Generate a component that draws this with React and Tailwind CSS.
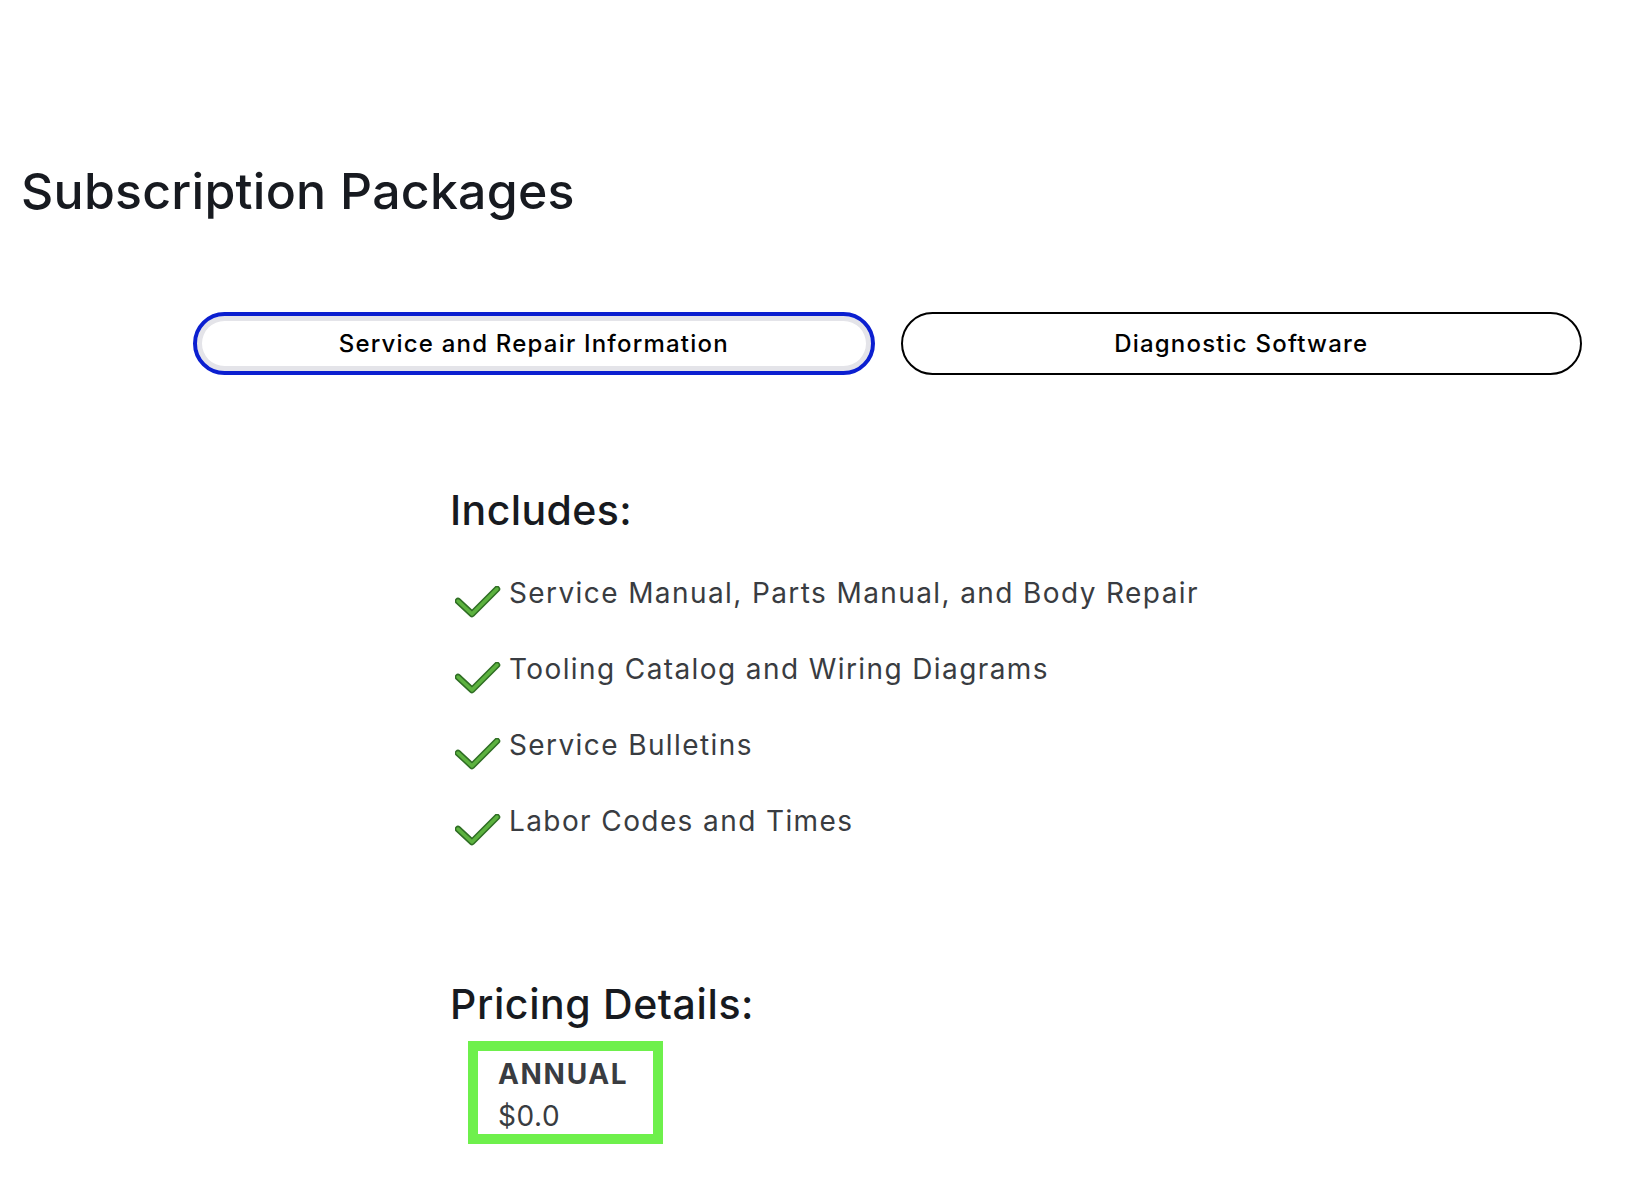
import React from 'react';

const features = [
  'Service Manual, Parts Manual, and Body Repair',
  'Tooling Catalog and Wiring Diagrams',
  'Service Bulletins',
  'Labor Codes and Times',
];

const Check = () => (
  <svg width="46" height="32" viewBox="0 0 46 32" className="shrink-0" aria-hidden="true">
    <polyline points="3,15 17,28 42,3" fill="none" stroke="#2f6e24" strokeWidth="6.5" strokeLinecap="round" strokeLinejoin="round" />
    <polyline points="3,15 17,28 42,3" fill="none" stroke="#5cb23f" strokeWidth="3.5" strokeLinecap="round" strokeLinejoin="round" />
  </svg>
);

export default function App() {
  return (
    <div className="min-h-[1186px] w-full bg-white font-['Inter',sans-serif] text-[#171a20]">
      <h1 className="pl-[21px] pt-[166px] text-[50px] font-medium leading-none tracking-[0.005em]">
        Subscription Packages
      </h1>

      <div className="ml-[193px] mt-[96px] grid w-[1389px] grid-cols-2 gap-[26px]">
        <button className="flex h-[63px] items-center justify-center rounded-full border-4 border-[#0b1fd0] bg-white text-[24px] font-medium tracking-[0.05em] text-black shadow-[inset_0_0_0_5px_#e4e4e9]">
          Service and Repair Information
        </button>
        <button className="flex h-[63px] items-center justify-center rounded-full border-2 border-black bg-white text-[24px] font-medium tracking-[0.05em] text-black">
          Diagnostic Software
        </button>
      </div>

      <div className="ml-[450px] mt-[115px]">
        <h2 className="text-[41px] font-medium leading-none tracking-[0.01em]">Includes:</h2>
        <ul className="mt-[48px] flex flex-col gap-[37px]">
          {features.map((f) => (
            <li key={f} className="flex items-start">
              <span className="ml-[5px] mt-[7px]">
                <Check />
              </span>
              <span className="ml-[8px] text-[28px] leading-[28px] tracking-[0.05em] text-[#393c41]">{f}</span>
            </li>
          ))}
        </ul>

        <h2 className="mt-[138px] text-[41px] font-medium leading-none tracking-[0.015em]">Pricing Details:</h2>
        <div className="ml-[18px] mt-[16px] flex h-[103px] w-[195px] flex-col border-[10px] border-[#6ef04c] pl-[20px] pt-[1px] text-[#393c41]">
          <span className="text-[28px] font-bold leading-[44px] tracking-[0.06em]">ANNUAL</span>
          <span className="text-[28px] leading-[40px] tracking-[0.02em]">$0.0</span>
        </div>
      </div>
    </div>
  );
}
